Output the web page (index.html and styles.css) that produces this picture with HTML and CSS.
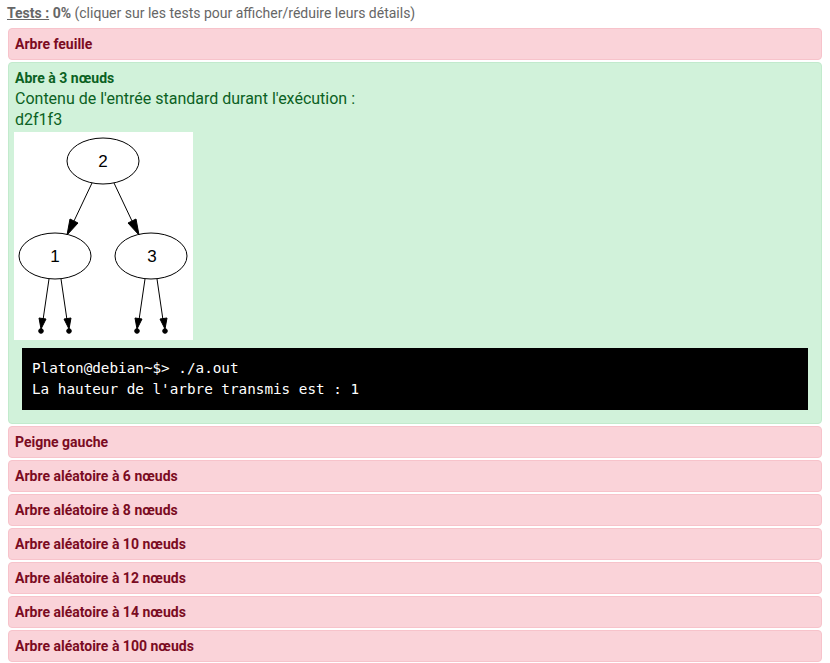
FILE: index.html
```html
<!DOCTYPE html>
<html lang="fr">
<head>
    <meta charset="UTF-8">
    <title>Tests</title>
    <link rel="stylesheet" href="styles.css">
</head>
<body>
    <div class="tests">
        <!-- Summary -->
        <p class="summary"><span class="label">Tests :</span> <b>0%</b> (cliquer sur les tests pour afficher/réduire leurs détails)</p>

        <div class="test failed"><h4>Arbre feuille</h4></div>

        <div class="test passed">
            <h4>Abre à 3 nœuds</h4>
            <p class="stdin">Contenu de l'entrée standard durant l'exécution :</p>
            <p class="stdin">d2f1f3</p>
            <div class="tree">
                <svg width="179" height="208" viewBox="0 0 179 208">
                    <rect width="179" height="208" fill="#fff"/>
                    <g fill="none" stroke="#000" stroke-width="1">
                        <ellipse cx="89" cy="29" rx="36" ry="23"/>
                        <ellipse cx="41" cy="124" rx="36" ry="23"/>
                        <ellipse cx="137" cy="124" rx="36" ry="23"/>
                        <line x1="78" y1="51" x2="60" y2="89"/>
                        <line x1="100" y1="51" x2="118" y2="89"/>
                        <line x1="35" y1="147" x2="29" y2="188"/>
                        <line x1="47" y1="147" x2="53" y2="188"/>
                        <line x1="131" y1="147" x2="125" y2="188"/>
                        <line x1="143" y1="147" x2="149" y2="188"/>
                    </g>
                    <g fill="#000" stroke="#000">
                        <polygon points="56,87 64,91 53,103"/>
                        <polygon points="114,91 122,87 125,103"/>
                        <polygon points="25,186 32,187 27,197"/>
                        <polygon points="50,187 57,186 55,197"/>
                        <polygon points="121,186 128,187 123,197"/>
                        <polygon points="146,187 153,186 151,197"/>
                        <circle cx="27" cy="199" r="2.3"/>
                        <circle cx="55" cy="199" r="2.3"/>
                        <circle cx="123" cy="199" r="2.3"/>
                        <circle cx="151" cy="199" r="2.3"/>
                    </g>
                    <g font-family="Liberation Sans, Arial, sans-serif" font-size="17" text-anchor="middle">
                        <text x="89" y="35">2</text>
                        <text x="41" y="130">1</text>
                        <text x="138" y="130">3</text>
                    </g>
                </svg>
            </div>
            <pre class="terminal">Platon@debian~$&gt; ./a.out
La hauteur de l'arbre transmis est : 1</pre>
        </div>

        <div class="test failed"><h4>Peigne gauche</h4></div>
        <div class="test failed"><h4>Arbre aléatoire à 6 nœuds</h4></div>
        <div class="test failed"><h4>Arbre aléatoire à 8 nœuds</h4></div>
        <div class="test failed"><h4>Arbre aléatoire à 10 nœuds</h4></div>
        <div class="test failed"><h4>Arbre aléatoire à 12 nœuds</h4></div>
        <div class="test failed"><h4>Arbre aléatoire à 14 nœuds</h4></div>
        <div class="test failed"><h4>Arbre aléatoire à 100 nœuds</h4></div>
    </div>
</body>
</html>
```

FILE: styles.css
```css
* {
    margin: 0;
    padding: 0;
    box-sizing: border-box;
}

body {
    font-family: "Roboto", sans-serif;
    background-color: #ffffff;
    padding: 4px 8px 0 8px;
}

.summary {
    color: #666666;
    font-size: 14px;
    line-height: 18px;
    margin-left: -1px;
    margin-bottom: 6px;
}

.summary .label {
    font-weight: bold;
    text-decoration: underline;
}

.test {
    border: 1px solid;
    border-radius: 4px;
    padding: 7px 6px 6px 6px;
    margin-bottom: 2px;
    width: 814px;
}

.test h4 {
    font-size: 14px;
    font-weight: bold;
    line-height: 17px;
}

.failed {
    background-color: #fad3d9;
    border-color: #f7c3cb;
    color: #7a0b22;
}

.passed {
    background-color: #d1f2da;
    border-color: #c2eacd;
    color: #0b6123;
    padding-bottom: 13px;
}

.passed h4 {
    margin-bottom: 1px;
}

.stdin {
    font-size: 16px;
    line-height: 21px;
}

.tree {
    display: flex;
    margin-top: 2px;
    margin-left: -1px;
}

.tree svg {
    display: block;
}

.terminal {
    background-color: #000000;
    color: #ffffff;
    font-family: "DejaVu Sans Mono", monospace;
    font-size: 14.3px;
    line-height: 21px;
    padding: 10px 10px 10px 10px;
    margin: 8px 7px 0 7px;
}
```
